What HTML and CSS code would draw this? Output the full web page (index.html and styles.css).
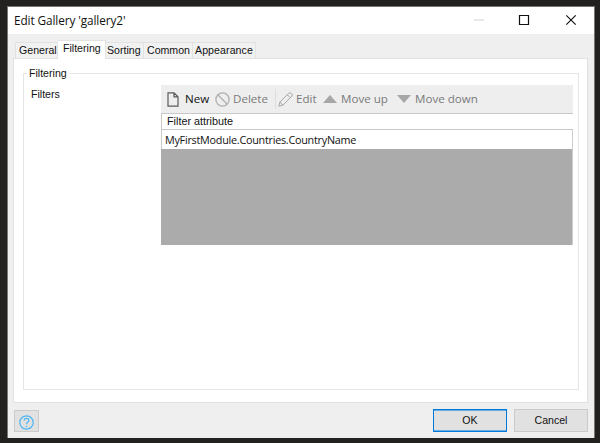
FILE: index.html
```html
<!DOCTYPE html>
<html lang="en">
<head>
<meta charset="utf-8">
<title>Edit Gallery</title>
<link rel="stylesheet" href="styles.css">
</head>
<body>
<main class="window">
  <header class="titlebar">
    <h1>Edit Gallery 'gallery2'</h1>
    <svg class="controls" width="104" height="12" viewBox="0 0 104 12" fill="none">
      <path d="M0 6h10" stroke="#e2e2e2" stroke-width="1.6"/>
      <path d="M45.5 1.5h9v9h-9z" stroke="#111" stroke-width="1.2"/>
      <path d="M92.3 1.3l9.4 9.4M101.7 1.3l-9.4 9.4" stroke="#111" stroke-width="1.15"/>
    </svg>
  </header>
  <nav class="tabs">
    <span class="tab general">General</span>
    <span class="tab active">Filtering</span>
    <span class="tab sorting">Sorting</span>
    <span class="tab common">Common</span>
    <span class="tab appearance">Appearance</span>
  </nav>
  <section class="panel">
    <fieldset class="group">
      <legend>Filtering</legend>
      <div class="field">
        <span class="label">Filters</span>
        <div class="grid">
          <div class="toolbar">
            <svg class="icon new-icon" width="12" height="15" viewBox="0 0 12 15" fill="none" stroke="#5b5b5b" stroke-width="1.2"><path d="M1 .8h6l4 4v9.4H1zM7 .8v4h4"/></svg>
            <span class="new">New</span>
            <svg class="icon delete-icon" width="15" height="15" viewBox="0 0 15 15" fill="none" stroke="#b0b0b0" stroke-width="1.3"><circle cx="7.5" cy="7.5" r="6.6"/><path d="M2.8 2.8l9.4 9.4"/></svg>
            <span class="delete">Delete</span>
            <i class="separator"></i>
            <svg class="icon edit-icon" width="15" height="15" viewBox="0 0 15 15" fill="none" stroke="#a8a8a8" stroke-width="1"><path d="M.8 14.2l1.1-4.1L10.8 1.2q1.1-1 2.2 0l.8.8q1 1.1 0 2.2l-8.9 8.9zM9.3 2.7l3 3M1.9 10.1l3 3"/></svg>
            <span class="edit">Edit</span>
            <svg class="icon up-icon" width="14" height="8" viewBox="0 0 14 8"><path d="M7 0l7 8H0z" fill="#a6a6a6"/></svg>
            <span class="up">Move up</span>
            <svg class="icon down-icon" width="14" height="8" viewBox="0 0 14 8"><path d="M0 0h14L7 8z" fill="#a6a6a6"/></svg>
            <span class="down">Move down</span>
          </div>
          <div class="grid-head">Filter attribute</div>
          <div class="grid-row"><span>MyFirstModule.Countries.CountryName</span></div>
          <div class="grid-empty"></div>
        </div>
      </div>
    </fieldset>
  </section>
  <footer class="footer">
    <button class="help" aria-label="Help">
      <svg width="15" height="15" viewBox="0 0 15 15" fill="none" stroke="#4eb5f1" stroke-width="1.2"><circle cx="7.5" cy="7.5" r="6.7"/><path d="M5.2 5.5c0-3 4.8-2.9 4.6-.1-.1 1.9-2.3 1.7-2.3 3.8M7.5 10.7v1.5"/></svg>
    </button>
    <button class="ok">OK</button>
    <button class="cancel">Cancel</button>
  </footer>
</main>
</body>
</html>
```
FILE: styles.css
```css
* { box-sizing: border-box; }
body {
  margin: 0;
  width: 600px;
  height: 443px;
  padding: 6px 5px 5px 7px;
  overflow: hidden;
  background: #222120;
  color: #111;
  font: 10.6px/14px "Liberation Sans", Arial, sans-serif;
}
.window {
  width: 588px;
  height: 432px;
  display: flex;
  flex-direction: column;
  border: 1px solid #777;
  border-bottom: 0;
  background: #efefef;
}
.titlebar {
  height: 27px;
  flex: none;
  display: flex;
  justify-content: space-between;
  padding: 7px 16px 0 6px;
  background: #fff;
}
h1 {
  margin: -2px 0 0;
  font: 400 11.8px/16px "Open Sans", sans-serif;
  letter-spacing: -0.1px;
  white-space: nowrap;
}
.tabs {
  height: 24px;
  flex: none;
  display: flex;
  align-items: flex-end;
  padding-left: 7px;
}
.tab {
  height: 16px;
  flex: none;
  border: 1px solid #e2e2e2;
  border-width: 1px 1px 0 0;
  padding: 0 0 0 2px;
  background: #f1f1f1;
  white-space: nowrap;
}
.general { width: 43px; padding-left: 3px; border-left-width: 1px; }
.active {
  width: 48px;
  height: 19px;
  margin-bottom: -1px;
  padding-left: 5px;
  background: #fff;
  z-index: 1;
}
.sorting { width: 38px; padding-left: 1px; }
.common { width: 49px; padding-left: 3px; }
.appearance { width: 63px; letter-spacing: 0.08px; }
.panel {
  width: 575px;
  height: 345px;
  flex: none;
  margin-left: 5px;
  padding: 7px 9px 12px;
  border: 1px solid #e1e1e1;
  background: #fff;
}
.group {
  width: 556px;
  height: 324px;
  margin: 0;
  padding: 5px 5px 0 7px;
  border: 1px solid #e5e5e5;
}
legend {
  height: 14px;
  margin-left: -4px;
  padding: 0 2px;
}
.field { display: flex; }
.label { width: 130px; padding-top: 2px; }
.grid { width: 412px; }
.toolbar {
  height: 28px;
  display: flex;
  align-items: center;
  padding-left: 6px;
  background: #eee;
  color: #7a7a7a;
  font: 11.6px/16px "Open Sans", sans-serif;
  white-space: nowrap;
}
.toolbar span, .icon, .separator { flex: none; }
.new-icon { margin-right: 6px; }
.new { width: 30px; color: #111; }
.delete-icon { margin-right: 3px; }
.delete { width: 42px; }
.separator { width: 1px; height: 20px; margin-right: 2px; background: #ddd; }
.edit-icon { margin-right: 3px; }
.edit { width: 27px; }
.up-icon, .down-icon { margin-right: 4px; }
.up { width: 56px; }
.grid-head {
  height: 17px;
  padding: 0 0 0 5px;
  border: solid #c8c8c8;
  border-width: 1px 0 1px 1px;
  font-size: 10.8px;
}
.grid-row {
  height: 19px;
  padding: 1px 0 0 3px;
  border: solid #ccc;
  border-width: 0 1px;
  font: 10.8px/18px "Open Sans", sans-serif;
  letter-spacing: -0.25px;
}
.grid-empty {
  height: 96px;
  border-right: 1px solid #ccc;
  background: #ababab;
}
.footer {
  display: flex;
  align-items: flex-start;
  padding: 6px 6px 0 6px;
}
button {
  margin: 0;
  padding: 0 0 2px;
  border: 1px solid #cacaca;
  border-radius: 0;
  background: #e1e1e1;
  color: #111;
  font: 10.6px/14px "Liberation Sans", Arial, sans-serif;
}
.help {
  width: 25px;
  height: 22px;
  margin-top: 1px;
  padding: 2px 0 0;
  display: grid;
  place-items: center;
}
.ok {
  width: 74px;
  height: 23px;
  margin: 0 7px 0 auto;
  border-color: #0078d7;
  box-shadow: inset 0 1px #69ade5, inset 0 -1px #69ade5;
}
.cancel { width: 74px; height: 23px; }
```
